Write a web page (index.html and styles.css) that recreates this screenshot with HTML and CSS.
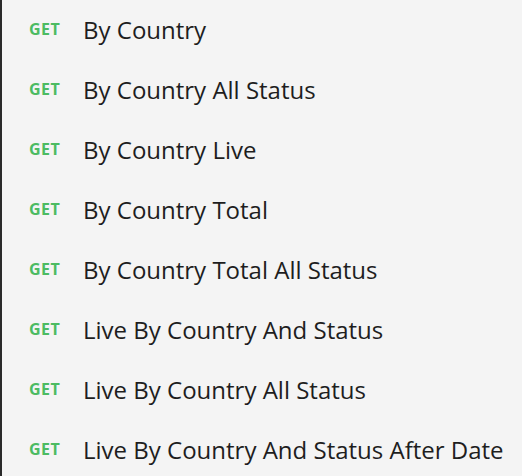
FILE: index.html
```html
<!DOCTYPE html>
<html>
<head>
<meta charset="utf-8">
<link rel="stylesheet" href="styles.css">
</head>
<body>
<ul class="list">
  <li class="item"><span class="method">GET</span><span class="name">By Country</span></li>
  <li class="item"><span class="method">GET</span><span class="name">By Country All Status</span></li>
  <li class="item"><span class="method">GET</span><span class="name">By Country Live</span></li>
  <li class="item"><span class="method">GET</span><span class="name">By Country Total</span></li>
  <li class="item"><span class="method">GET</span><span class="name">By Country Total All Status</span></li>
  <li class="item"><span class="method">GET</span><span class="name">Live By Country And Status</span></li>
  <li class="item"><span class="method">GET</span><span class="name">Live By Country All Status</span></li>
  <li class="item"><span class="method">GET</span><span class="name">Live By Country And Status After Date</span></li>
</ul>
</body>
</html>
```
FILE: styles.css
```css
html, body {
  margin: 0;
  padding: 0;
  background: #f4f4f4;
  height: 100%;
  overflow: hidden;
}
body {
  border-left: 2px solid #2a2a2a;
  box-sizing: border-box;
  font-family: "Open Sans", "Liberation Sans", sans-serif;
}
.list {
  list-style: none;
  margin: 0;
  padding: 0;
}
.item {
  display: flex;
  align-items: center;
  box-sizing: border-box;
  height: 60px;
  padding-left: 27px;
  padding-bottom: 2px;
}
.method {
  width: 54px;
  flex: none;
  font-size: 16px;
  font-weight: 700;
  color: #4cbb62;
  letter-spacing: 0.5px;
}
.name {
  font-size: 24px;
  color: #1e1e1e;
  white-space: nowrap;
}
```
